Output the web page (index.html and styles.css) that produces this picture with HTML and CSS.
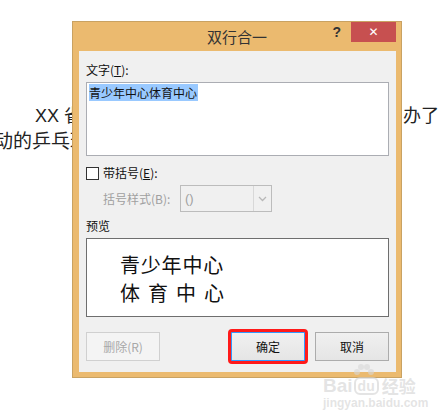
FILE: index.html
```html
<!DOCTYPE html>
<html lang="zh-CN">
<head>
    <meta charset="UTF-8">
    <meta name="viewport" content="width=device-width, initial-scale=1.0">
    <title>双行合一</title>
    <link rel="stylesheet" href="styles.css">
</head>
<body>

    <div class="doc">
        <div class="doc-line first">
            <span>XX 省青少年中心</span>
            <span>办了</span>
        </div>
        <div class="doc-line second">动的乒乓球</div>
    </div>

    <div class="dialog">
        <div class="titlebar">
            <span></span>
            <span class="title">双行合一</span>
            <div class="controls">
                <span class="help">?</span>
                <span class="close">✕</span>
            </div>
        </div>

        <div class="dialog-body">
            <div class="label">文字(<u>T</u>):</div>
            <div class="text-box"><span class="selected">青少年中心体育中心</span></div>

            <div class="check-row">
                <span class="checkbox"></span>
                <span>带括号(<u>E</u>):</span>
            </div>

            <div class="select-row">
                <span class="select-label">括号样式(B):</span>
                <div class="select">
                    <span class="select-value">()</span>
                    <span class="select-arrow">
                        <svg width="9" height="6" viewBox="0 0 9 6"><path d="M1 1 L4.5 4.5 L8 1" fill="none" stroke="#b8b8b8" stroke-width="1.3"/></svg>
                    </span>
                </div>
            </div>

            <div class="label preview-label">预览</div>
            <div class="preview">
                <div class="preview-line">青少年中心</div>
                <div class="preview-line spread">体育中心</div>
            </div>

            <div class="buttons">
                <button class="btn disabled">删除(R)</button>
                <div class="btn-group">
                    <div class="marked">
                        <button class="btn default">确定</button>
                        <span class="mark"></span>
                    </div>
                    <button class="btn">取消</button>
                </div>
            </div>
        </div>
    </div>

    <div class="watermark">
        <div class="wm-top">
            <svg class="paw" width="26" height="16" viewBox="0 0 26 16">
                <circle cx="6" cy="9" r="3"/>
                <circle cx="10" cy="4" r="3"/>
                <circle cx="16" cy="4" r="3"/>
                <circle cx="20" cy="9" r="3"/>
            </svg>
        </div>
        <div class="wm-logo">
            <span>Bai</span><span class="wm-du">du</span><span class="wm-cn">经验</span>
        </div>
        <div class="wm-url">jingyan.baidu.com</div>
    </div>

</body>
</html>
```

FILE: styles.css
```css
body {
    margin: 0;
    width: 440px;
    height: 417px;
    overflow: hidden;
    background: #fff;
    position: relative;
    font-family: "Noto Sans CJK SC", sans-serif;
}
.doc {
    padding-top: 103px;
    font-family: "Liberation Sans", "Noto Sans CJK SC", sans-serif;
    font-size: 18px;
    color: #222;
}
.doc-line {
    height: 26px;
    line-height: 26px;
    white-space: nowrap;
}
.doc-line.first {
    display: flex;
    justify-content: space-between;
    padding-left: 35px;
    padding-right: 1px;
}
.doc-line.second {
    margin-left: -6px;
    font-size: 19px;
}

/* dialog window */
.dialog {
    position: absolute;
    left: 72px;
    top: 21px;
    width: 330px;
    height: 357px;
    box-sizing: border-box;
    background: #ebba6f;
    border: 1px solid #c9a262;
}
.titlebar {
    height: 29px;
    display: grid;
    grid-template-columns: 1fr auto 1fr;
}
.title {
    font-size: 15px;
    line-height: 29px;
    color: #333;
}
.controls {
    justify-self: end;
    display: flex;
    align-items: flex-start;
    margin-right: 5px;
}
.help {
    font-family: "Liberation Sans", sans-serif;
    font-weight: bold;
    font-size: 14px;
    line-height: 20px;
    color: #333;
    margin-right: 10px;
}
.close {
    width: 45px;
    height: 20px;
    background: #c75050;
    color: #fff;
    font-family: "DejaVu Sans", sans-serif;
    font-size: 12px;
    font-weight: bold;
    line-height: 20px;
    text-align: center;
}
.dialog-body {
    margin: 0 5px 5px 6px;
    height: 321px;
    box-sizing: border-box;
    background: #f0f0f0;
    padding: 11px 7px 11px 7px;
    font-size: 12px;
    color: #111;
}
.label {
    line-height: 16px;
    height: 16px;
}
u {
    text-decoration: underline;
    text-underline-offset: 1px;
}
.text-box {
    margin-top: 4px;
    height: 74px;
    box-sizing: border-box;
    background: #fff;
    border: 1px solid #abadb3;
    padding: 1px 2px;
    line-height: 18px;
}
.selected {
    background: #99c9ff;
    padding-right: 1px;
}
.check-row {
    margin-top: 9px;
    height: 16px;
    display: flex;
    align-items: center;
    gap: 4px;
    line-height: 16px;
}
.checkbox {
    width: 13px;
    height: 13px;
    box-sizing: border-box;
    background: #fff;
    border: 1px solid #333;
}
.select-row {
    margin-top: 4px;
    display: flex;
    align-items: center;
    padding-left: 17px;
    color: #a0a0a0;
}
.select-label {
    width: 77px;
}
.select {
    width: 92px;
    height: 27px;
    box-sizing: border-box;
    border: 1px solid #bcbcbc;
    display: flex;
}
.select-value {
    flex: 1;
    padding-left: 4px;
    line-height: 25px;
    font-family: "Liberation Sans", sans-serif;
    font-size: 13px;
}
.select-arrow {
    width: 17px;
    border-left: 1px solid #d8d8d8;
    display: flex;
    align-items: center;
    justify-content: center;
}
.preview-label {
    margin-top: 6px;
}
.preview {
    margin-top: 4px;
    height: 79px;
    box-sizing: border-box;
    background: #fff;
    border: 1px solid #6e6e6e;
    padding: 12px 0 0 33px;
    font-size: 20px;
    color: #111;
}
.preview-line {
    line-height: 28px;
    width: 104px;
    letter-spacing: 0.8px;
}
.preview-line.spread {
    text-align: justify;
    text-align-last: justify;
    letter-spacing: 0;
}
.buttons {
    margin-top: 15px;
    display: flex;
}
.btn-group {
    margin-left: auto;
    display: flex;
    gap: 10px;
}
.btn {
    width: 74px;
    height: 29px;
    box-sizing: border-box;
    border: 1px solid #acacac;
    background: linear-gradient(#f0f0f0, #e5e5e5);
    font-family: "Noto Sans CJK SC", "Liberation Sans", sans-serif;
    font-size: 12px;
    color: #111;
    padding: 0;
}
.btn.disabled {
    border-color: #d0d0d0;
    background: #f4f4f4;
    color: #a8a8a8;
}
.btn.default {
    border-color: #3399ff;
}
.marked {
    position: relative;
}
.mark {
    position: absolute;
    left: -3px;
    right: -3px;
    top: -3px;
    bottom: -3px;
    border: 3px solid #ff1a1a;
    border-radius: 4px;
}

/* watermark */
.watermark {
    position: absolute;
    left: 323px;
    top: 363px;
    color: rgba(210, 210, 210, 0.6);
    font-family: "Liberation Sans", "Noto Sans CJK SC", sans-serif;
}
.wm-top {
    height: 14px;
    padding-left: 28px;
}
.paw {
    fill: rgba(215, 215, 215, 0.6);
}
.wm-logo {
    display: flex;
    align-items: center;
    font-size: 19px;
    font-weight: bold;
    line-height: 18px;
}
.wm-du {
    border: 2px solid rgba(210, 210, 210, 0.6);
    border-radius: 6px;
    font-size: 14px;
    line-height: 14px;
    padding: 0 2px;
    margin: 0 3px 0 1px;
}
.wm-cn {
    font-family: "Noto Sans CJK SC", sans-serif;
    font-size: 17px;
}
.wm-url {
    font-size: 12px;
    font-weight: bold;
    line-height: 14px;
    margin-top: 1px;
}
```
